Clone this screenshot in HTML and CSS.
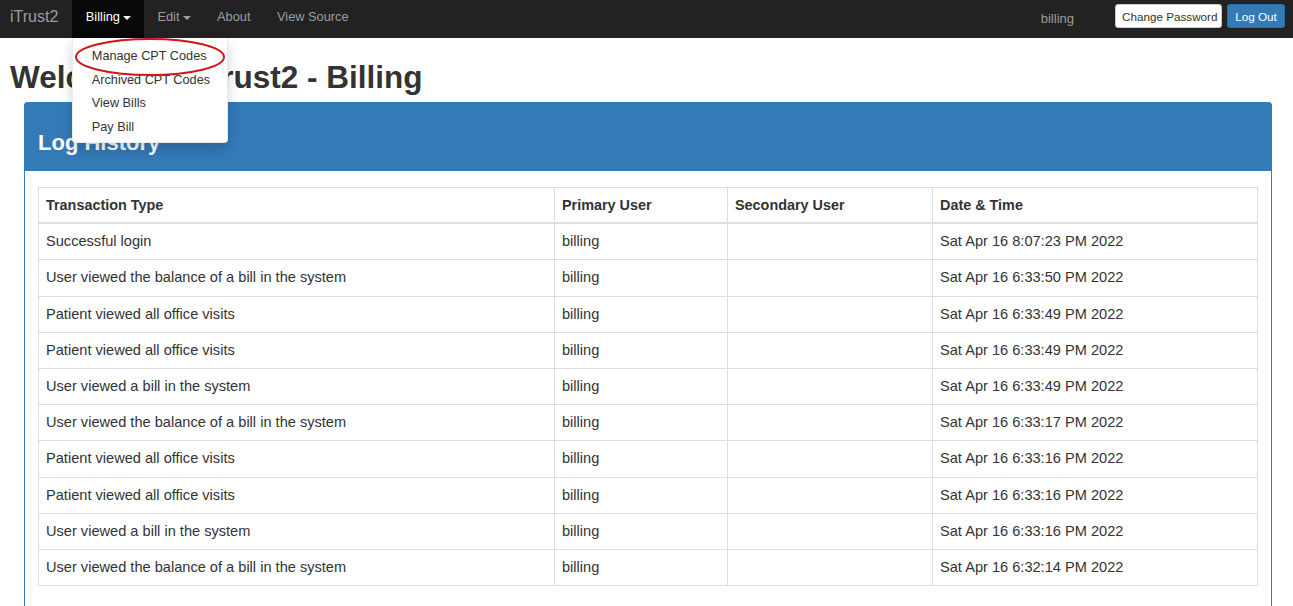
FILE: index.html
```html
<!DOCTYPE html>
<html>
<head>
<meta charset="utf-8">
<title>iTrust2 - Billing</title>
<link rel="stylesheet" href="styles.css">
</head>
<body>
<nav class="navbar">
  <a class="brand">iTrust2</a>
  <ul class="nav">
    <li class="nav-item active dropdown">
      <a>Billing<span class="caret"></span></a>
      <ul class="dropdown-menu">
        <li><a>Manage CPT Codes</a></li>
        <li><a>Archived CPT Codes</a></li>
        <li><a>View Bills</a></li>
        <li><a>Pay Bill</a></li>
      </ul>
    </li>
    <li class="nav-item"><a>Edit<span class="caret"></span></a></li>
    <li class="nav-item"><a>About</a></li>
    <li class="nav-item"><a>View Source</a></li>
  </ul>
  <div class="nav-right">
    <span class="user">billing</span>
    <button class="btn btn-default">Change Password</button>
    <button class="btn btn-primary">Log Out</button>
  </div>
</nav>

<svg class="annotation" width="160" height="44" viewBox="0 0 160 44">
  <ellipse cx="78" cy="21" rx="74" ry="18" fill="none" stroke="#d0141b" stroke-width="2"/>
</svg>

<main class="page">
  <h1 class="title">Welcome to iTrust2 - Billing</h1>
  <section class="panel">
    <div class="panel-heading"><h2>Log History</h2></div>
    <div class="panel-body">
      <table class="log-table">
        <colgroup>
          <col class="c1"><col class="c2"><col class="c3"><col class="c4">
        </colgroup>
        <thead>
          <tr><th>Transaction Type</th><th>Primary User</th><th>Secondary User</th><th>Date &amp; Time</th></tr>
        </thead>
        <tbody>
          <tr><td>Successful login</td><td>billing</td><td></td><td>Sat Apr 16 8:07:23 PM 2022</td></tr>
          <tr><td>User viewed the balance of a bill in the system</td><td>billing</td><td></td><td>Sat Apr 16 6:33:50 PM 2022</td></tr>
          <tr><td>Patient viewed all office visits</td><td>billing</td><td></td><td>Sat Apr 16 6:33:49 PM 2022</td></tr>
          <tr><td>Patient viewed all office visits</td><td>billing</td><td></td><td>Sat Apr 16 6:33:49 PM 2022</td></tr>
          <tr><td>User viewed a bill in the system</td><td>billing</td><td></td><td>Sat Apr 16 6:33:49 PM 2022</td></tr>
          <tr><td>User viewed the balance of a bill in the system</td><td>billing</td><td></td><td>Sat Apr 16 6:33:17 PM 2022</td></tr>
          <tr><td>Patient viewed all office visits</td><td>billing</td><td></td><td>Sat Apr 16 6:33:16 PM 2022</td></tr>
          <tr><td>Patient viewed all office visits</td><td>billing</td><td></td><td>Sat Apr 16 6:33:16 PM 2022</td></tr>
          <tr><td>User viewed a bill in the system</td><td>billing</td><td></td><td>Sat Apr 16 6:33:16 PM 2022</td></tr>
          <tr><td>User viewed the balance of a bill in the system</td><td>billing</td><td></td><td>Sat Apr 16 6:32:14 PM 2022</td></tr>
        </tbody>
      </table>
    </div>
  </section>
</main>
</body>
</html>
```

FILE: styles.css
```css
* { box-sizing: border-box; }
html, body { margin: 0; padding: 0; }
body {
  font-family: "Liberation Sans", Arial, sans-serif;
  color: #333;
  background: #fff;
  font-size: 14px;
  overflow: hidden;
}

.navbar {
  height: 38px;
  background: #222;
  display: flex;
  align-items: flex-start;
  padding-left: 10px;
  padding-right: 8px;
  position: relative;
  z-index: 5;
}
.brand {
  color: #9d9d9d;
  font-size: 16px;
  padding-right: 14px;
  line-height: 33px;
}
.nav {
  list-style: none;
  margin: 0;
  padding: 0;
  display: flex;
  height: 38px;
}
.nav-item {
  position: relative;
  font-size: 12.8px;
}
.nav-item > a {
  display: block;
  height: 38px;
  line-height: 34px;
  padding: 0 13px 0 13.5px;
  color: #9d9d9d;
}
.nav-item.active > a {
  color: #fff;
  background: #080808;
}
.caret {
  display: inline-block;
  width: 0;
  height: 0;
  margin-left: 3px;
  vertical-align: middle;
  border-top: 4px solid;
  border-left: 4px solid transparent;
  border-right: 4px solid transparent;
}

.dropdown-menu {
  position: absolute;
  top: 38px;
  left: 0;
  width: 156px;
  list-style: none;
  margin: 0;
  padding: 7px 0 3px;
  background: #fff;
  border-radius: 0 0 4px 4px;
  box-shadow: 0 6px 12px rgba(0,0,0,0.175);
  border: 1px solid rgba(0,0,0,0.08);
  border-top: 0;
}
.dropdown-menu a {
  display: block;
  padding: 3px 18.5px;
  line-height: 17.5px;
  font-size: 12.7px;
  color: #333;
  white-space: nowrap;
}

.nav-right {
  margin-left: auto;
  display: flex;
  align-items: center;
  height: 36px;
}
.user {
  color: #9d9d9d;
  font-size: 13px;
  margin-right: 41px;
}
.btn {
  font-family: "Liberation Sans", Arial, sans-serif;
  font-size: 11.7px;
  height: 24px;
  padding: 0 6px;
  border-radius: 3px;
  border: 1px solid #ccc;
  margin-top: -4px;
  white-space: nowrap;
  cursor: pointer;
}
.btn-default { background: #fff; color: #333; width: 107px; }
.btn-primary { background: #337ab7; color: #fff; border-color: #2e6da4; margin-left: 5px; width: 58px; }

.annotation {
  position: absolute;
  left: 72px;
  top: 36px;
  z-index: 10;
}

.page {
  padding: 0 21px 0 24px;
}
.title {
  margin: 22px 0 7px -14px;
  font-size: 31.5px;
  font-weight: bold;
  line-height: 35px;
  color: #333;
}

.panel {
  border: 1px solid #337ab7;
  border-radius: 4px 4px 0 0;
  height: 520px;
}
.panel-heading {
  background: #337ab7;
  height: 69px;
  padding: 0 14px;
  display: flex;
  align-items: center;
  margin: -1px -1px 0;
  border-radius: 4px 4px 0 0;
}
.panel-heading h2 {
  margin: 12px 0 0;
  color: #fff;
  font-size: 22px;
  font-weight: bold;
}
.panel-body {
  padding: 16px 13px 15px;
}
.log-table {
  width: 100%;
  border-collapse: collapse;
  table-layout: fixed;
  font-size: 14.6px;
}
.c1 { width: 516px; }
.c2 { width: 173px; }
.c3 { width: 205px; }
.c4 { width: auto; }
.log-table th, .log-table td {
  border: 1px solid #ddd;
  padding: 8px 7px;
  line-height: 19.2px;
  text-align: left;
  white-space: nowrap;
}
.log-table th {
  font-size: 14.4px;
  font-weight: bold;
  border-bottom-width: 2px;
  padding-bottom: 7px;
}
```
